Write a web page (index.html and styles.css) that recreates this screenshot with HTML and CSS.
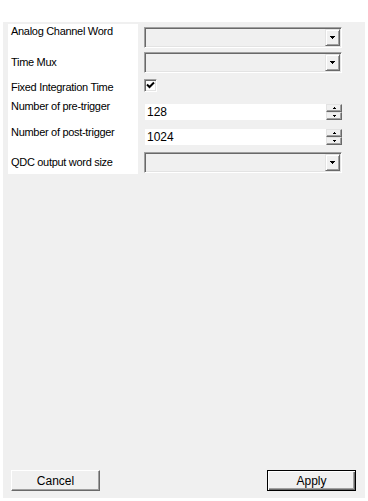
FILE: index.html
```html
<!DOCTYPE html>
<html>
<head>
<meta name="viewport" content="width=device-width, initial-scale=1">
<link rel="stylesheet" href="styles.css">
</head>
<body>

<div class="panel">
  <div class="form">
    <div class="label l1">Analog Channel Word</div>
    <div class="cell c1">
      <div class="combo"><span class="drop"><svg width="5" height="3"><polygon points="0,0 5,0 2.5,3" fill="#000"/></svg></span></div>
    </div>

    <div class="label l2">Time Mux</div>
    <div class="cell c2">
      <div class="combo"><span class="drop"><svg width="5" height="3"><polygon points="0,0 5,0 2.5,3" fill="#000"/></svg></span></div>
    </div>

    <div class="label l3">Fixed Integration Time</div>
    <div class="cell c3">
      <span class="check"><svg width="9" height="9"><polyline points="1,3.5 3.5,6 8,1.5" fill="none" stroke="#000" stroke-width="2"/></svg></span>
    </div>

    <div class="label l4">Number of pre-trigger</div>
    <div class="cell c4">
      <div class="spin">
        <span class="spin-value">128</span>
        <span class="spin-btns">
          <span class="spin-btn"><svg width="3" height="2"><polygon points="1.5,0 3,2 0,2" fill="#000"/></svg></span>
          <span class="spin-btn"><svg width="3" height="2"><polygon points="0,0 3,0 1.5,2" fill="#000"/></svg></span>
        </span>
      </div>
    </div>

    <div class="label l5">Number of post-trigger</div>
    <div class="cell c5">
      <div class="spin">
        <span class="spin-value">1024</span>
        <span class="spin-btns">
          <span class="spin-btn"><svg width="3" height="2"><polygon points="1.5,0 3,2 0,2" fill="#000"/></svg></span>
          <span class="spin-btn"><svg width="3" height="2"><polygon points="0,0 3,0 1.5,2" fill="#000"/></svg></span>
        </span>
      </div>
    </div>

    <div class="label l6">QDC output word size</div>
    <div class="cell c6">
      <div class="combo"><span class="drop"><svg width="5" height="3"><polygon points="0,0 5,0 2.5,3" fill="#000"/></svg></span></div>
    </div>
  </div>

  <div class="footer">
    <button class="btn">Cancel</button>
    <button class="btn default">Apply</button>
  </div>
</div>

</body>
</html>
```

FILE: styles.css
```css
* {
  box-sizing: border-box;
}

body {
  margin: 0;
  background: #ffffff;
  font-family: "Liberation Sans", Arial, sans-serif;
  font-size: 11px;
  line-height: 13px;
  color: #000;
}

/* Gray dialog area */
.panel {
  margin: 22px 3px 3px 3px;
  height: 476px;
  background: #f0f0f0;
  display: flex;
  flex-direction: column;
  padding: 2px 0 0 5px;
}

/* Two column form: white label column, controls on the right */
.form {
  display: grid;
  grid-template-columns: 130px 1fr;
  grid-template-rows: 26px 25px 24px 25px 25px 25px;
  column-gap: 6px;
}

.label {
  background: #fff;
  padding-left: 3px;
  white-space: nowrap;
  letter-spacing: -0.3px;
}

.l1 { padding-top: 1px; }
.l2 { padding-top: 6px; }
.l3 { padding-top: 6px; }
.l4 { padding-top: 1px; }
.l5 { padding-top: 2px; }
.l6 { padding-top: 7px; }

.c1 { padding-top: 3px; }
.c2 { padding-top: 2px; }
.c3 { padding-top: 4px; }
.c4 { padding-top: 5px; }
.c5 { padding-top: 5px; }
.c6 { padding-top: 3px; }

/* Sunken combo box */
.combo {
  width: 198px;
  height: 21px;
  border: 1px solid;
  border-color: #a0a0a0 #fff #fff #a0a0a0;
  box-shadow: inset 1px 1px #696969, inset -1px -1px #e3e3e3;
  background: #f0f0f0;
  display: flex;
  justify-content: flex-end;
  padding: 1px;
}

.drop {
  width: 15px;
  height: 17px;
  border: 1px solid;
  border-color: #e3e3e3 #696969 #696969 #e3e3e3;
  box-shadow: inset 1px 1px #fff, inset -1px -1px #a0a0a0;
  background: #f0f0f0;
  display: flex;
  align-items: center;
  justify-content: center;
}

.drop svg,
.spin-btn svg {
  display: block;
  shape-rendering: crispEdges;
}

.check svg {
  display: block;
}

/* Checkbox */
.check {
  display: flex;
  align-items: center;
  justify-content: center;
  width: 13px;
  height: 13px;
  border: 1px solid;
  border-color: #a0a0a0 #fff #fff #a0a0a0;
  box-shadow: inset 1px 1px #696969, inset -1px -1px #e3e3e3;
  background: #fff;
}

/* Numeric up/down */
.spin {
  display: flex;
  width: 198px;
  height: 16px;
}

.spin-value {
  flex: 1;
  background: #fff;
  padding: 1px 0 0 2px;
  margin-left: 1px;
  font-size: 12px;
  line-height: 14px;
}

.spin-btns {
  display: flex;
  flex-direction: column;
  width: 16px;
}

.spin-btn {
  height: 8px;
  border: 1px solid;
  border-color: #e3e3e3 #696969 #696969 #e3e3e3;
  box-shadow: inset -1px -1px #a0a0a0;
  background: #f0f0f0;
  display: flex;
  align-items: center;
  justify-content: center;
}

/* Bottom buttons */
.footer {
  margin-top: auto;
  display: flex;
  justify-content: space-between;
  padding: 0 9px 7px 3px;
}

.btn {
  width: 89px;
  height: 21px;
  margin: 0;
  padding: 0;
  font-family: "Liberation Sans", Arial, sans-serif;
  font-size: 12px;
  color: #000;
  background: #f0f0f0;
  border: 1px solid;
  border-color: #fff #696969 #696969 #fff;
  box-shadow: inset -1px -1px #a0a0a0;
}

.btn.default {
  border: 1px solid #000;
  box-shadow: inset 1px 1px #fff, inset -1px -1px #696969, inset -2px -2px #a0a0a0;
}
```
